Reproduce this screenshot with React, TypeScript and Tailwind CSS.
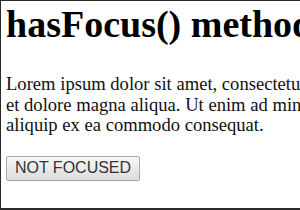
export default function App() {
  return (
    <div className="w-[300px] h-[210px] overflow-hidden bg-white border-l border-t border-b-2 border-[#2a2a2a] pl-[5px] font-['Liberation_Serif',serif] text-black">
      <h1 className="text-[38px] font-bold leading-[43px] mt-[2px] whitespace-nowrap">hasFocus() method</h1>
      <p className="mt-[28px] text-[18.6px] leading-[20.5px] whitespace-nowrap text-[#111]">
        Lorem ipsum dolor sit amet, consectetur adipiscing elit, sed do eiusmod tempor incididunt ut labore
        <br />
        et dolore magna aliqua. Ut enim ad minim veniam, quis nostrud exercitation ullamco laboris nisi ut
        <br />
        aliquip ex ea commodo consequat.
      </p>
      <button className="mt-[20px] h-[25px] w-[134px] rounded-[2px] border border-[#a9a9a9] bg-gradient-to-b from-[#f8f8f8] to-[#dcdcdc] font-['Liberation_Sans',sans-serif] text-[16px] text-[#333] leading-none">
        NOT FOCUSED
      </button>
    </div>
  );
}
